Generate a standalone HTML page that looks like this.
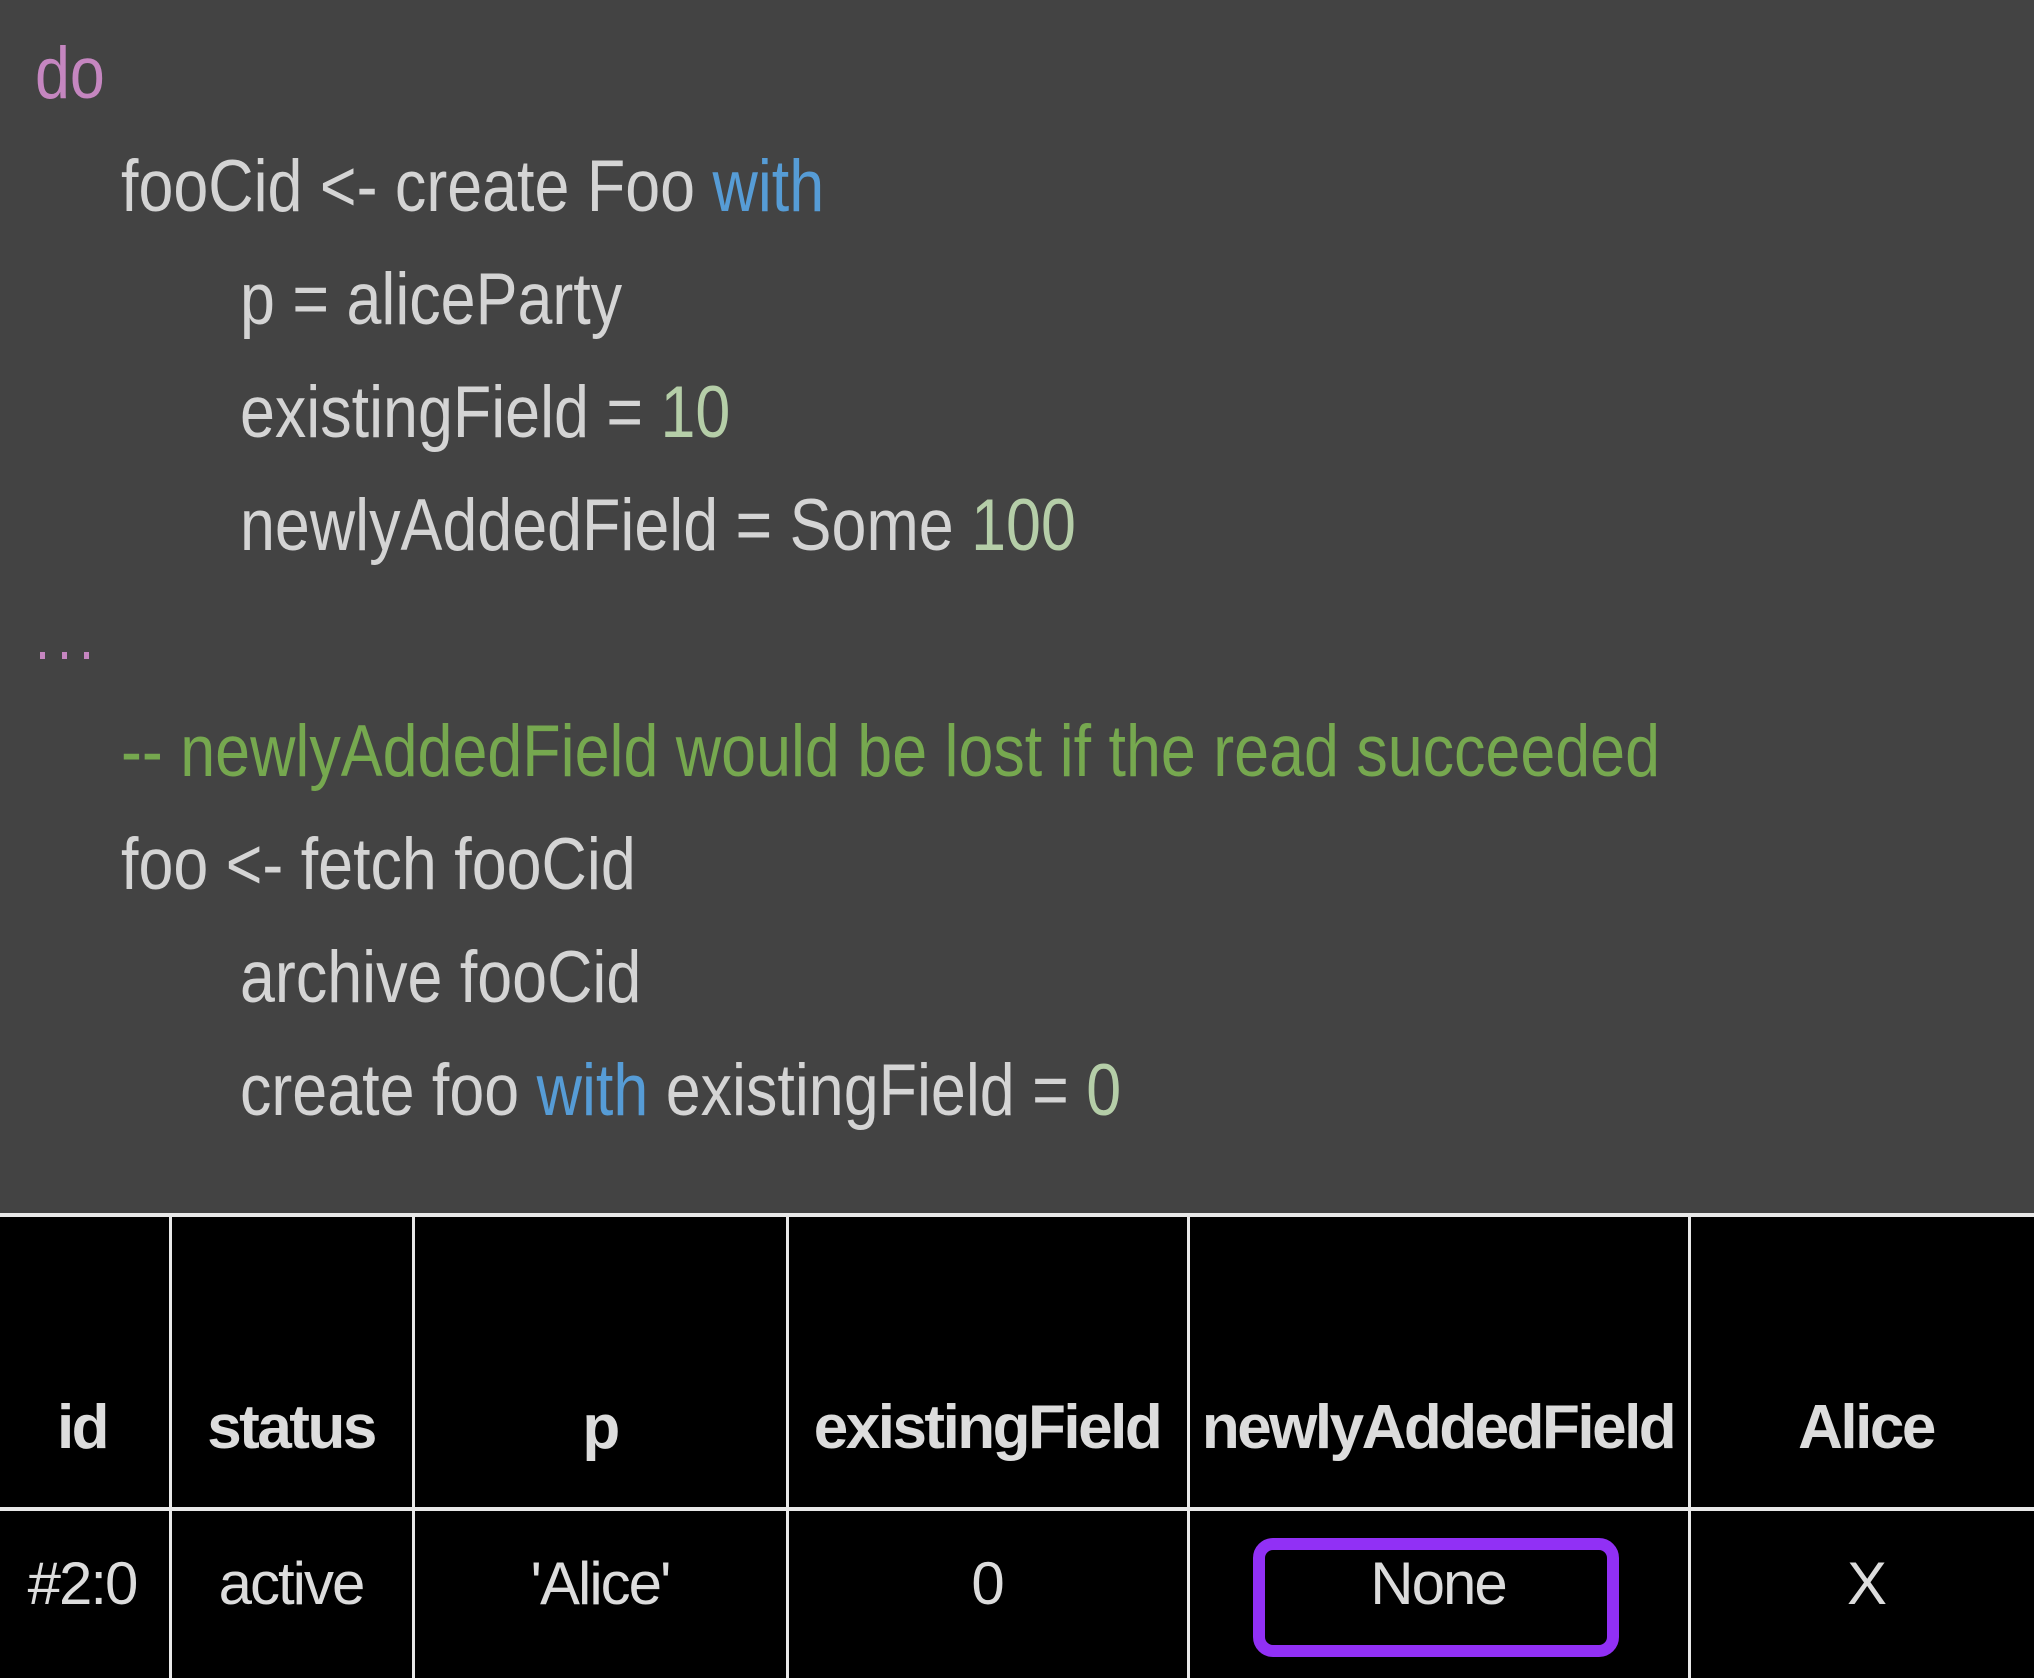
<!DOCTYPE html>
<html><head><meta charset="utf-8">
<style>
html,body{margin:0;padding:0;}
body{width:2034px;height:1678px;background:#434343;position:relative;overflow:hidden;font-family:"Liberation Sans",Arial,sans-serif;}
.l{position:absolute;font-size:73px;line-height:82px;height:82px;white-space:pre;color:#d4d4d4;transform:scaleX(0.86);transform-origin:0 0;}
.k{color:#c586c0}.b{color:#569cd6}.n{color:#b5cea8}.c{color:#76a84f}
.tbl{position:absolute;left:0;top:1213px;width:2034px;height:465px;background:#000;}
.h{position:absolute;top:0;height:4px;left:0;right:0;background:#e8e8e8;}
.v{position:absolute;top:0;bottom:0;width:3px;background:#e8e8e8;}
.t{position:absolute;color:#dcdcdc;white-space:nowrap;text-align:center;transform:translateX(-50%);}
.th{font-weight:bold;font-size:62px;top:180px;line-height:70px;letter-spacing:-2.5px;}
.td{font-size:60px;top:336px;line-height:70px;letter-spacing:-2px;}
.dot{position:absolute;top:652px;width:5px;height:7px;background:#c586c0;}
</style></head><body>
<div class="l k" style="left:35px;top:33px">do</div>
<div class="l" style="left:121px;top:146px">fooCid &lt;- create Foo <span class="b">with</span></div>
<div class="l" style="left:240px;top:259px">p = aliceParty</div>
<div class="l" style="left:240px;top:372px">existingField = <span class="n">10</span></div>
<div class="l" style="left:240px;top:485px">newlyAddedField = Some <span class="n">100</span></div>
<div class="dot" style="left:40px"></div><div class="dot" style="left:62px"></div><div class="dot" style="left:84px"></div>
<div class="l c" style="left:121px;top:711px">-- newlyAddedField would be lost if the read succeeded</div>
<div class="l" style="left:121px;top:824px">foo &lt;- fetch fooCid</div>
<div class="l" style="left:240px;top:937px">archive fooCid</div>
<div class="l" style="left:240px;top:1050px">create foo <span class="b">with</span> existingField = <span class="n">0</span></div>

<div class="tbl">
  <div class="h" style="top:0"></div>
  <div class="h" style="top:294px"></div>
  <div class="v" style="left:169px"></div>
  <div class="v" style="left:412px"></div>
  <div class="v" style="left:786px"></div>
  <div class="v" style="left:1187px"></div>
  <div class="v" style="left:1688px"></div>
  <div class="t th" style="left:82px">id</div>
  <div class="t th" style="left:291px">status</div>
  <div class="t th" style="left:600px">p</div>
  <div class="t th" style="left:987px">existingField</div>
  <div class="t th" style="left:1438px">newlyAddedField</div>
  <div class="t th" style="left:1866px">Alice</div>
  <div class="t td" style="left:82px">#2:0</div>
  <div class="t td" style="left:291px">active</div>
  <div class="t td" style="left:600px">'Alice'</div>
  <div class="t td" style="left:987px">0</div>
  <div style="position:absolute;left:1253px;top:325px;width:342px;height:95px;border:12px solid #9130f5;border-radius:20px;"></div>
  <div class="t td" style="left:1438px">None</div>
  <div class="t td" style="left:1866px">X</div>
</div>
</body></html>
